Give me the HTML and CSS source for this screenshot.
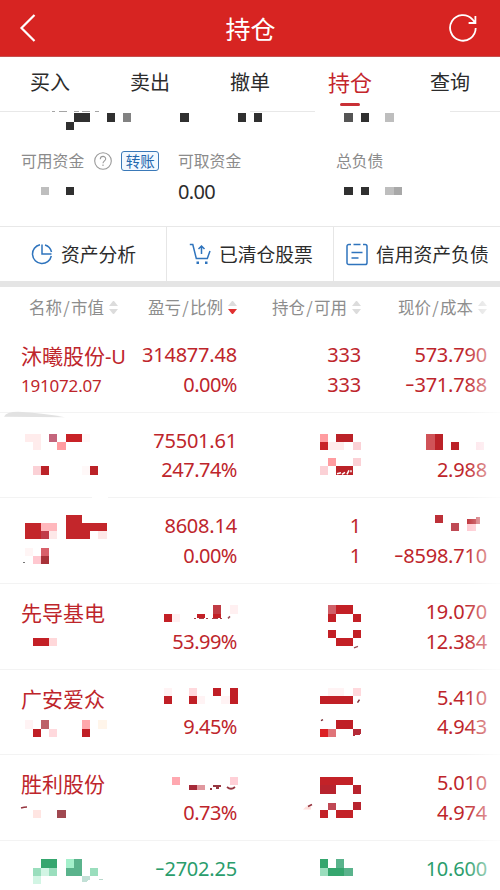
FILE: index.html
```html
<!DOCTYPE html>
<html lang="zh-CN">
<head>
<meta charset="utf-8">
<title>持仓</title>
<link rel="stylesheet" href="styles.css">
</head>
<body>
<header class="topbar">
  <svg class="back" viewBox="0 0 18 30"><path d="M15.500 2 2.500 15 15.500 28"/></svg>
  <h1>持仓</h1>
  <svg class="refresh" viewBox="0 0 30 30"><path d="M27.700 15A12.800 12.800 0 1 1 24.400 6.300L27 9.600M27.400 3v7h-6.800"/></svg>
</header>
<nav class="tabs">
  <a>买入</a><a>卖出</a><a>撤单</a><a class="active">持仓</a><a>查询</a>
</nav>
<section class="summary">
  <div class="fund fund-a"><div class="label">可用资金<svg class="help" viewBox="0 0 18 18"><circle cx="9" cy="9" r="8.300"/><path d="M6.300 7.200C6.300 3.400 11.800 3.600 11.700 7 11.600 8.800 9 9 9 11.300M9 12.600v1.500"/></svg><span class="transfer">转账</span></div></div>
  <div class="fund fund-b"><div class="label">可取资金</div><div class="amount">0.00</div></div>
  <div class="fund fund-c"><div class="label">总负债</div></div>
  <svg class="mosaic" viewBox="0 111 500 115" shape-rendering="crispEdges">
    <path fill="#a5a5a5" d="M52 111h3v1h-3zM59 111h8v1h-8zM74 111h5v1h-5zM82 111h8v1h-8zM95 111h4v1h-4z"/>
    <path fill="#e8e8e8" d="M0 111h50v1H0zM250 111h65v1h-65zM450 111h50v1h-50z"/>
    <g transform="translate(0 -1.300) scale(8.200)">
      <path fill="#303030" d="M9 14h2v1h-2zM13 14h1v1h-1zM8 15h1v1h-1zM22 14h1v1h-1zM29 14h1v1h-1zM31 14h1v1h-1zM44 14h1v1h-1zM8 23h1v1h-1zM42 23h1v1h-1zM44 23h1v1h-1z"/>
      <path fill="#555" d="M42 14h1v1h-1z"/><path fill="#828282" d="M15 14h1v1h-1z"/>
      <path fill="#bebebe" d="M47 14h1v1h-1zM5 23h1v1h-1zM47 23h1v1h-1z"/><path fill="#a8a8a8" d="M48 23h1v1h-1z"/>
    </g>
  </svg>
</section>
<section class="actions">
  <a><svg class="pie" viewBox="0 0 22 22"><path d="M9 1.700A9.500 9.500 0 1 0 20.300 13M11 1.500v9.500h9.500M14 2A9.500 9.500 0 0 1 20.500 9"/></svg><span>资产分析</span></a>
  <a><svg class="cart" viewBox="0 0 22 22"><path d="M.8 1.500h3L7.300 15.500h11L21 8M12.500 11V3.500M9.500 6l3-3 3 3"/><path class="solid" d="M7.500 18.500h2.500v2.500H7.500zM16 18.500h2.500v2.500H16z"/></svg><span>已清仓股票</span></a>
  <a><svg class="sheet" viewBox="0 0 22 23"><path d="M5 1.500H2.800A1.800 1.800 0 0 0 1 3.300v16.400a1.800 1.800 0 0 0 1.800 1.800h16.400a1.800 1.800 0 0 0 1.800-1.800V3.300a1.800 1.800 0 0 0-1.800-1.800H17M7.500 1.500h7M5.500 9.500h11M5.500 15h7"/></svg><span>信用资产负债</span></a>
</section>
<main class="table">
  <div class="thead">
    <span>名称<u>/</u>市值<i class="sort"></i></span><span>盈亏<u>/</u>比例<i class="sort down"></i></span><span>持仓<u>/</u>可用<i class="sort"></i></span><span>现价<u>/</u>成本<i class="sort"></i></span>
  </div>
  <div class="row">
    <div class="cell"><b class="name">沐曦股份<span class="latin">-U</span></b><b class="value">191072.07</b></div>
    <div class="cell"><b>314877.48</b><b class="pct">0.00%</b></div>
    <div class="cell"><b>333</b><b>333</b></div>
    <div class="cell"><b>573.790</b><b><i class="minus">-</i>371.788</b></div>
  </div>
  <div class="row">
    <div class="cell"></div>
    <div class="cell"><b>75501.61</b><b class="pct">247.74%</b></div>
    <div class="cell"></div>
    <div class="cell"><b></b><b>2.988</b></div>
    <svg class="mosaic" viewBox="0 412.700 500 85.700" shape-rendering="crispEdges">
      <path fill="#e2e2e2" shape-rendering="auto" d="M4 416.500Q6 411.500 18 411.500 42 412.500 65 417z"/>
      <path fill="#fff" d="M92 497h16v2H92z"/>
      <g transform="translate(0 -1.300) scale(8.200)">
        <path fill="#ffecec" d="M3 53h2v1h-2zM4 54h1v1h-1zM40 54h2v1h-2z"/><path fill="#fff8f8" d="M10 53h1v1h-1zM10 57h1v1h-1z"/>
        <path fill="#c4657c" d="M6 53h1v1h-1z"/><path fill="#c82227" d="M8 53h2v1h-2zM39 54h1v1h-1z"/>
        <path fill="#ff9ca0" d="M7 54h1v1h-1zM39 53h1v1h-1zM40 56h1v1h-1z"/>
        <path fill="#fbd1d6" d="M4 57h1v1h-1zM43 54h1v1h-1zM43 56h1v1h-1zM39 57h1v1h-1z"/>
        <path fill="#bb2228" d="M5 57h1v1h-1zM11 57h1v1h-1zM41 53h2v1h-2zM41 57h2v1h-2zM53 53h1v2h-1zM55 54h1v1h-1z"/>
        <path fill="#d05358" d="M52 53h1v2h-1z"/><path fill="#fde2e8" d="M58 54h1v1h-1z"/>
      </g>
      <path stroke="#fff" stroke-width="1.500" fill="none" shape-rendering="auto" d="M337 473.500l4-1M342 474l3-2M347 474l2-4M351 472v-2"/>
    </svg>
  </div>
  <div class="row">
    <div class="cell"></div>
    <div class="cell"><b>8608.14</b><b class="pct">0.00%</b></div>
    <div class="cell"><b>1</b><b>1</b></div>
    <div class="cell"><b></b><b><i class="minus">-</i>8598.710</b></div>
    <svg class="mosaic" viewBox="0 498.400 500 85.700" shape-rendering="crispEdges">
      <g transform="translate(0 -1.300) scale(8.200)">
        <path fill="#c3262b" d="M8 63h2v1h3v1h-2v1h-3zM3 64h2v2h-2z"/><path fill="#ffb8bd" d="M5 64h2v1h-2z"/>
        <path fill="#c03b48" d="M5 65h1v1h-1z"/><path fill="#fde8e8" d="M6 65h1v1h-1zM12 65h1v1h-1z"/><path fill="#fff5f5" d="M3 67h1v1h-1z"/>
        <path fill="#d8606a" d="M5 67h1v1h-1z"/><path fill="#ffc8d0" d="M4 68h1v1h-1zM57 64h1v1h-1z"/><path fill="#a83239" d="M5 68h1v1h-1z"/>
        <path fill="#bd3038" d="M53 63h1v1h-1zM57 63.450h1v.6h-1z"/><path fill="#cf6369" d="M58 63.300h.6v.75h-.6z"/><path fill="#bf4a55" d="M55 64h1v1h-1z"/>
      </g>
      <path fill="#777" d="M23 562h2v1h-2z"/>
    </svg>
  </div>
  <div class="row">
    <div class="cell"><b class="name">先导基电</b></div>
    <div class="cell"><b></b><b class="pct">53.99%</b></div>
    <div class="cell"></div>
    <div class="cell"><b>19.070</b><b>12.384</b></div>
    <svg class="mosaic" viewBox="0 584.100 500 85.700" shape-rendering="crispEdges">
      <g transform="translate(0 -1.300) scale(8.200)">
        <path fill="#c32026" d="M4 78h2v1h-2zM20 75h1v1h-1zM24 75h1v.55h-1zM26 75h1v.55h-1zM41 74h2v1h-2zM40 75h1v1h-1zM43 75h1v1h-1zM40 77h1v1h-1zM43 77h1v1h-1zM41 78h2v1h-2z"/>
        <path fill="#c03c44" d="M26 74h1v1h-1z"/><path fill="#d06068" d="M40 74h1v1h-1z"/><path fill="#ffd8da" d="M6 78h1v1h-1z"/><path fill="#fff0f1" d="M21 75h1v1h-1zM28 74h1v1h-1z"/>
      </g>
      <path fill="#a84048" d="M194 618h2v1h-2zM199 618h5v1h-5zM206 618h2v1h-2zM212 618h6v1h-6zM220 618h2v1h-2z"/>
      <path stroke="#985058" stroke-width="1.500" fill="none" shape-rendering="auto" d="M228 618.500l2-2M354 648l4-1.500"/>
    </svg>
  </div>
  <div class="row">
    <div class="cell"><b class="name">广安爱众</b></div>
    <div class="cell"><b></b><b class="pct">9.45%</b></div>
    <div class="cell"></div>
    <div class="cell"><b>5.410</b><b>4.943</b></div>
    <svg class="mosaic" viewBox="0 669.800 500 85.700" shape-rendering="crispEdges">
      <g transform="translate(0 -1.300) scale(8.200)">
        <path fill="#fff3f4" d="M20 84h1v1h-1zM24 85h1v1h-1zM27 85h1v1h-1zM3 88h1v1h-1zM40 84h2v1h-2z"/><path fill="#fff5ea" d="M12 88h1v1h-1z"/>
        <path fill="#ffd9dd" d="M23 84h1v1h-1zM6 89h1v1h-1zM43 84h1v1h-1z"/>
        <path fill="#c01f26" d="M20 85h1v1h-1zM23 85h1v1h-1zM26 84h1v1h-1zM28 84h1v2h-1zM4 89h1v1h-1zM10 89h1v1h-1zM39 85h4v1h-4zM41 88h2v1h-2z"/>
        <path fill="#bd6068" d="M5 88h1v1h-1z"/><path fill="#ffa8ac" d="M10 88h1v1h-1z"/><path fill="#dc2024" d="M39 89h1v1h-1z"/><path fill="#e07479" d="M40 89h1v1h-1z"/><path fill="#b42b38" d="M43 89h1v.7l-1 .2z"/>
      </g>
      <path stroke="#7c3038" stroke-width="1.500" fill="none" shape-rendering="auto" d="M357.500 702.500l2-3M321 720.500l2-1"/>
    </svg>
  </div>
  <div class="row">
    <div class="cell"><b class="name">胜利股份</b></div>
    <div class="cell"><b></b><b class="pct">0.73%</b></div>
    <div class="cell"></div>
    <div class="cell"><b>5.010</b><b>4.974</b></div>
    <svg class="mosaic" viewBox="0 755.500 500 85.700" shape-rendering="crispEdges">
      <g transform="translate(0 -1.300) scale(8.200)">
        <path fill="#ffa8b0" d="M21 95h1v1h-1z"/><path fill="#ffd0d7" d="M28 95h1v1h-1z"/><path fill="#a52a38" d="M23 96h1v.6h-1z"/><path fill="#e0989e" d="M24 96h1v.6h-1z"/>
        <path fill="#ffe5e2" d="M4 99h1v1h-1z"/><path fill="#a04850" d="M7 99h1v1h-1z"/>
        <path fill="#c32228" d="M39 95h4v1h-4zM39 99h1v1h-1zM41 99h2v1h-2z"/><path fill="#b8242e" d="M39 96h2v1h-2zM43 96h1v1h-1zM43 98h1v1h-1z"/><path fill="#c04854" d="M40 98.200h1v.8h-1z"/>
      </g>
      <path fill="#963640" d="M210 789h2v2h-2zM213 786h8v2h-8zM216 788h3v2h-3z"/>
      <path fill="#ffe0dc" shape-rendering="auto" d="M303 810l3-3h5v3z"/>
      <path stroke="#963640" stroke-width="1.700" fill="none" shape-rendering="auto" d="M227 787.500q4 3.500 8 0M21 808.500q3-1 6-1M308 807l4-2"/>
    </svg>
  </div>
  <div class="row last">
    <div class="cell"></div>
    <div class="cell"><b><i class="minus">-</i>2702.25</b></div>
    <div class="cell"></div>
    <div class="cell"><b>10.600</b></div>
    <svg class="mosaic" viewBox="0 841.200 500 85.700" shape-rendering="crispEdges">
      <g transform="translate(0 -1.300) scale(8.200)">
        <path fill="#35a66e" d="M5 105h2v1h-2zM39 105h1v1h-1zM40 106h2v1h-2z"/><path fill="#a4f0cb" d="M8 105h1v1h-1z"/>
        <path fill="#5ab38c" d="M9 105h1v1h-1zM8 106h2v1h-2zM41 105h1v1h-1zM42 106h1v1h-1z"/>
        <path fill="#9adebd" d="M4 106h1v1h-1zM6 106h1v1h-1zM11 106h1v1h-1zM39 106h1v1h-1z"/><path fill="#d2f5e4" d="M5 106h1v1h-1zM4 107h1v1h-1z"/><path fill="#c2e0d6" d="M10 107h1v.4l-.4 .3h-.6z"/>
      </g>
      <path fill="#b8d8cc" d="M99 879h4v1h-4z"/>
    </svg>
  </div>
  <div class="fade"></div>
</main>
</body>
</html>
```
FILE: styles.css
```css
* { box-sizing: border-box; }
html, body { margin: 0; height: 890px; overflow: hidden; }
body {
  background: #fff;
  color: #2c2c2c;
  font-family: "Noto Sans CJK SC", sans-serif;
  font-weight: 400;
}
svg { fill: none; flex: none; }
.topbar {
  height: 57px;
  padding: 0 22px 0 19px;
  display: grid;
  grid-template-columns: 30px 1fr 30px;
  align-items: center;
  background: #d72422;
  border-bottom: 1px solid #c6504e;
  color: #fff;
}
.topbar h1 { margin: 0; font-size: 25px; line-height: 36px; font-weight: 400; text-align: center; padding-left: 4px; }
.topbar svg { stroke: #fff; }
.back { width: 18px; height: 30px; stroke-width: 2.2; }
.refresh { width: 30px; height: 30px; stroke-width: 1.8; }
.tabs { display: grid; grid-template-columns: repeat(5, 1fr); height: 54px; }
.tabs a { height: 48px; display: flex; justify-content: center; align-items: center; font-size: 20px; position: relative; }
.tabs .active { color: #c4262c; font-size: 22px; }
.tabs .active::after {
  content: "";
  position: absolute;
  bottom: -1px;
  width: 20px;
  height: 3px;
  border-radius: 2px;
  background: #c93036;
}
.summary {
  position: relative;
  height: 116px;
  border-bottom: 1px solid #e8e8e8;
  padding: 37.5px 0 0 21px;
  display: grid;
  grid-template-columns: 157px 158px 1fr;
}
.label { display: flex; align-items: center; height: 24px; font-size: 15.8px; color: #8b8b8b; white-space: nowrap; }
.help { width: 18px; height: 18px; margin: 0 9px 0 10px; stroke: #999; stroke-width: 1.1; }
.transfer {
  width: 38px;
  height: 20px;
  border: 1.5px solid #3a79b8;
  border-radius: 3px;
  background: #f1f8ff;
  color: #2468ae;
  font-size: 14.5px;
  line-height: 17px;
  text-align: center;
}
.amount { font: 20px/28px "Noto Sans", sans-serif; letter-spacing: -.7px; margin-top: 5.500px; }
.mosaic { position: absolute; left: 0; top: 0; width: 500px; overflow: visible; }
.actions { display: grid; grid-template-columns: 167px 167px 1fr; height: 60px; border-bottom: 6px solid #e5e5e5; }
.actions a { display: flex; align-items: center; font-size: 18.8px; border-right: 1px solid #e6e6e6; white-space: nowrap; }
.actions span { padding-bottom: 2px; }
.actions a:last-child { border: 0; }
.actions svg { stroke: #2f74bd; stroke-width: 1.5; }
.actions .solid { fill: #2f74bd; stroke: none; }
.pie { width: 22px; height: 22px; margin: 0 8px 0 31px; }
.cart { width: 22px; height: 22px; margin: 0 8px 0 22px; }
.sheet { width: 22px; height: 23px; margin: 0 8px 0 12px; }
.table { position: relative; }
.thead, .row { display: grid; grid-template-columns: 109px 107px 124px 126px; padding-left: 21px; }
.thead { height: 40px; align-items: center; color: #8d8d8d; font-size: 16.5px; line-height: 24px; white-space: nowrap; }
.thead span { display: flex; align-items: center; justify-content: flex-end; }
.thead span:first-child { justify-content: flex-start; padding-left: 8px; }
.thead u { text-decoration: none; width: 9px; text-align: center; }
.sort { width: 9px; height: 13px; margin-left: 5px; display: flex; flex-direction: column; justify-content: space-between; }
.sort::before, .sort::after { content: ""; border: 4.5px solid transparent; border-top-width: 0; border-bottom: 5px solid #dcdcdc; }
.sort::after { border-bottom-width: 0; border-top: 5px solid #dcdcdc; }
.sort.down::after { border-top-color: #e03030; }
.row { position: relative; height: 85.7px; border-bottom: 1px solid #f3f3f3; color: #be252b; }
.row.last { height: 49px; border: 0; color: #2a9d6c; }
.cell { padding-top: 13px; text-align: right; white-space: nowrap; }
.cell:first-child { text-align: left; }
.cell b { display: block; height: 29.5px; font: 20px/29.5px "Noto Sans", sans-serif; letter-spacing: -.2px; }
.cell .pct { letter-spacing: -.5px; }
.cell .name { font: 21px/30px "Noto Sans CJK SC", sans-serif; letter-spacing: 0; }
.cell .value { font-size: 17px; line-height: 32px; letter-spacing: -.2px; }
.latin { font: 20px "Noto Sans", sans-serif; letter-spacing: -.3px; }
.minus { display: inline-block; width: 9px; font-style: normal; text-align: left; transform: translateY(-1px) scaleX(1.5); transform-origin: left; }
.fade {
  position: absolute;
  top: 0;
  bottom: 0;
  right: 0;
  width: 35px;
  background: linear-gradient(90deg, rgba(255,255,255,0), rgba(255,255,255,.48) 60%, rgba(255,255,255,.8));
}
```
